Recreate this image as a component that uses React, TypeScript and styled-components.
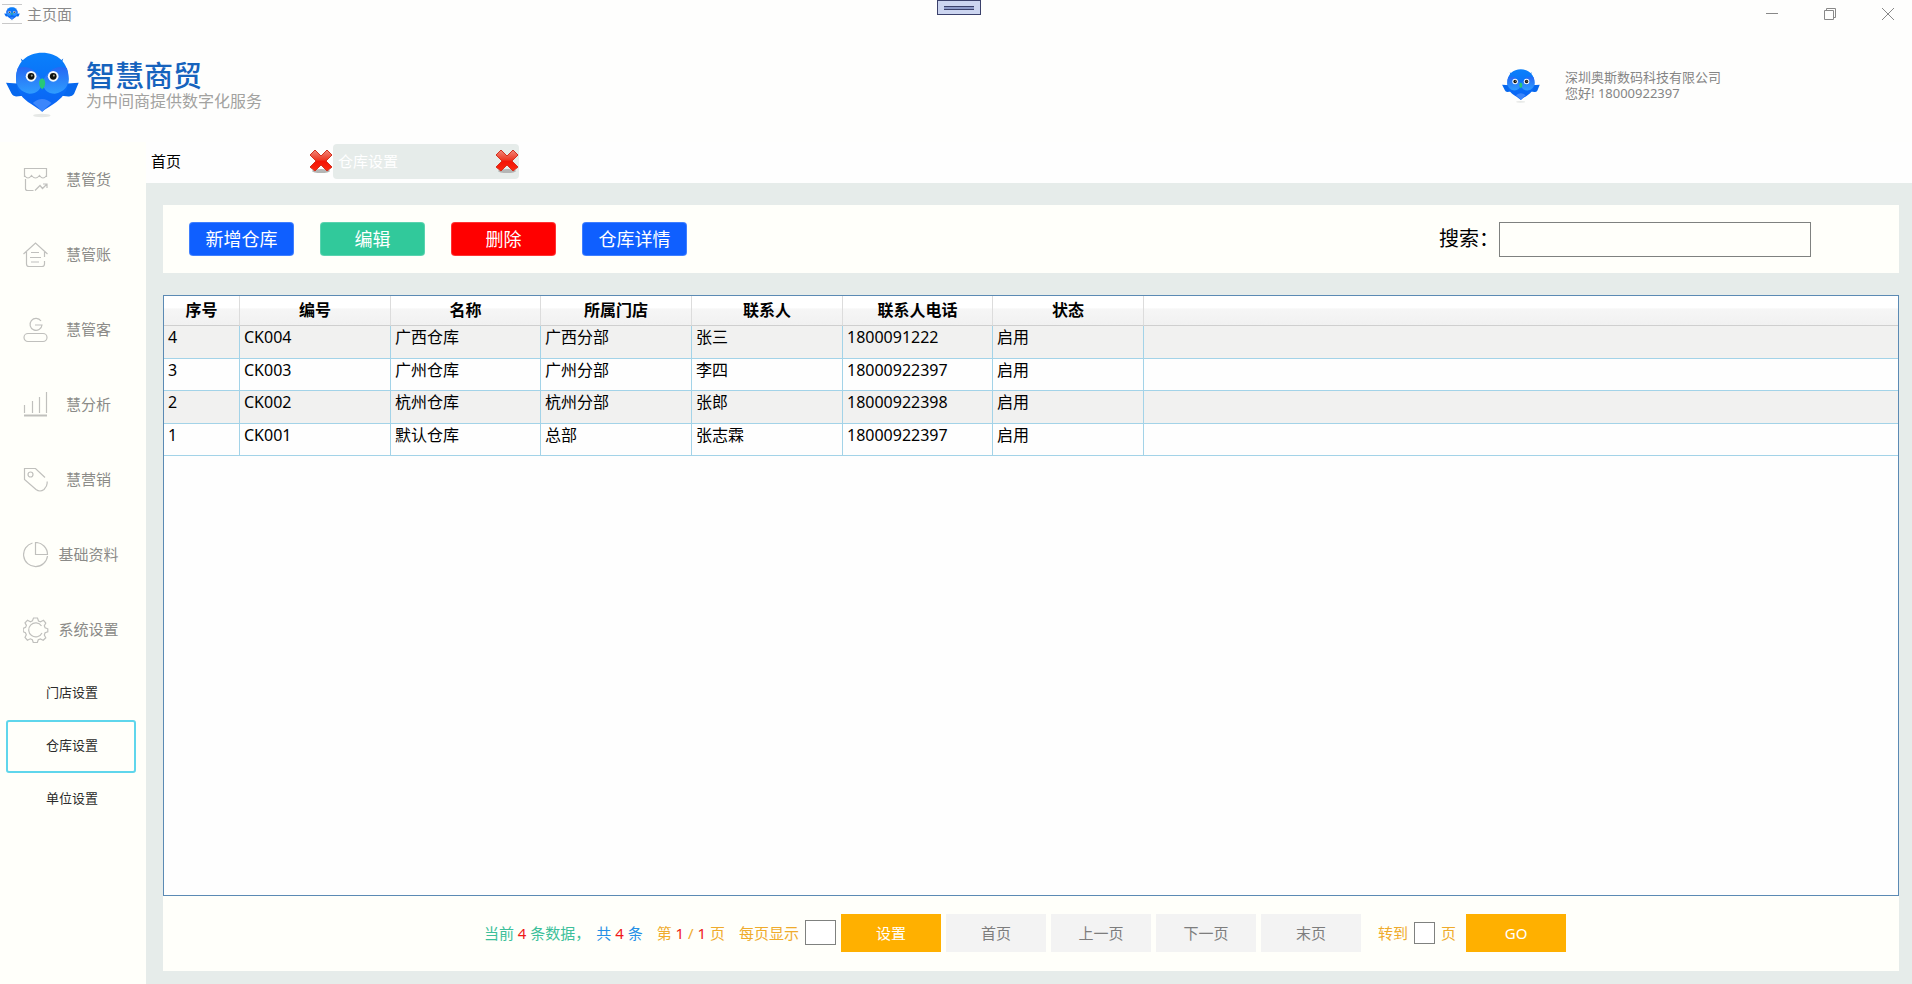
import React from "react";
import styled, { createGlobalStyle } from "styled-components";

const GlobalStyle = createGlobalStyle`
  *, *::before, *::after { box-sizing: border-box; }
  body {
    margin: 0;
    background: #fefefd;
    color: #000;
    font-family: "Noto Sans", "Noto Sans CJK SC", sans-serif;
    font-size: 15px;
    line-height: 20px;
  }
  button, input { font: inherit; margin: 0; border-radius: 0; }
  button { padding: 0; cursor: pointer; }
  a { color: inherit; text-decoration: none; }
`;

const Shell = styled.div`
  display: flex;
  flex-direction: column;
  min-height: 100vh;
`;

const TitleBar = styled.header`
  position: relative;
  display: flex;
  align-items: center;
  height: 28px;
  padding: 0 1px 0 2px;
  gap: 5px;
  color: #8a8a8a;
`;

const AppIcon = styled.span`
  display: flex;
  align-items: center;
  justify-content: center;
  width: 20px;
  height: 20px;
  border-top: 1px solid #c9c9c9;
  border-bottom: 1px solid #c9c9c9;
`;

const WindowControls = styled.div`
  display: flex;
  gap: 12px;
  margin-left: auto;
`;

const WindowButton = styled.button`
  display: flex;
  align-items: center;
  justify-content: center;
  width: 46px;
  height: 28px;
  border: 0;
  background: transparent;
  color: #888;
`;

const DragHandle = styled.div`
  position: absolute;
  top: 0;
  left: calc(50% - 19px);
  display: flex;
  justify-content: center;
  align-items: center;
  width: 44px;
  height: 15px;
  border: 1px solid #3b416b;
  background: #ccd5f0;
`;

const DragGrip = styled.span`
  width: 30px;
  height: 4px;
  border-top: 1px solid #3b416b;
  border-bottom: 1px solid #3b416b;
  background: #8e9bc9;
`;

const BrandBar = styled.div`
  display: flex;
  justify-content: space-between;
  align-items: flex-start;
  height: 114px;
  padding: 24px 191px 0 6px;
`;

const Brand = styled.div`
  display: flex;
  gap: 7px;
`;

const BrandText = styled.div`
  display: flex;
  flex-direction: column;
  padding-top: 9px;
  font-family: "Liberation Sans", "Noto Sans CJK SC", sans-serif;
`;

const BrandName = styled.h1`
  margin: 0;
  color: #1663bd;
  font-size: 29px;
  font-weight: 500;
  line-height: 32px;
`;

const BrandSlogan = styled.p`
  margin: 0;
  color: #a2a2a0;
  font-size: 16px;
  line-height: 18px;
`;

const Account = styled.div`
  display: flex;
  align-items: flex-start;
  gap: 25px;
  width: 219px;
  padding-top: 17px;
  color: #858585;
  font-size: 13px;
  line-height: 16px;
  white-space: nowrap;
`;

const OwlDrawing = styled.svg`
  flex: none;
`;

const Body = styled.div`
  display: flex;
  flex: 1;
`;

const Sidebar = styled.nav`
  flex: none;
  width: 146px;
  background: #fffffa;
`;

const MenuItem = styled.a`
  display: flex;
  align-items: center;
  height: 75px;
  padding: 0 22px 0 23px;
  gap: 4px;
  color: #8b8b88;
`;

const MenuLabel = styled.span`
  flex: 1;
  padding-bottom: 2px;
  text-align: center;
  white-space: nowrap;
`;

const SubMenu = styled.div`
  padding: 0 10px 0 6px;
`;

const SubItem = styled.a<{ $active?: boolean }>`
  display: flex;
  align-items: center;
  justify-content: center;
  height: 53px;
  padding: 0 0 4px 2px;
  border: 2px solid ${(p) => (p.$active ? "#5fd6ec" : "transparent")};
  border-radius: 3px;
  color: #2b2b2b;
  font-size: 13px;
`;

const Main = styled.main`
  display: flex;
  flex: 1;
  flex-direction: column;
  min-width: 0;
`;

const TabStrip = styled.div`
  display: flex;
  height: 41px;
  padding-top: 2px;
  background: #fefefe;
`;

const Tab = styled.div<{ $active?: boolean }>`
  display: flex;
  align-items: center;
  justify-content: space-between;
  width: ${(p) => (p.$active ? 186 : 187)}px;
  height: 35px;
  padding: 0 0 2px 5px;
  border-radius: 4px;
  background: ${(p) => (p.$active ? "#e6ecea" : "transparent")};
  color: ${(p) => (p.$active ? "#fff" : "#000")};
`;

const TabLabel = styled.button`
  border: 0;
  background: transparent;
  color: inherit;
`;

const TabClose = styled.button`
  display: flex;
  width: 24px;
  height: 24px;
  border: 0;
  background: transparent;
`;

const Workspace = styled.div`
  display: flex;
  flex: 1;
  flex-direction: column;
  padding: 22px 13px 13px 17px;
  background: #e6ecea;
`;

const Toolbar = styled.div`
  display: flex;
  align-items: center;
  height: 68px;
  margin-bottom: 22px;
  padding: 0 88px 0 26px;
  gap: 26px;
  background: #fffffa;
`;

const ActionButton = styled.button<{ $color: string }>`
  width: 105px;
  height: 34px;
  border: 1px solid rgba(255, 255, 255, 0.2);
  border-radius: 4px;
  background: ${(p) => p.$color};
  color: #fff;
  font-size: 18px;
  line-height: 24px;
`;

const SearchField = styled.label`
  display: flex;
  align-items: center;
  margin-left: auto;
  font-size: 20px;
  line-height: 24px;
`;

const SearchInput = styled.input`
  width: 312px;
  height: 35px;
  padding: 0 6px;
  border: 1px solid #7f817f;
  background: transparent;
`;

const TableFrame = styled.section`
  flex: 1;
  border: 1px solid #5b8ab4;
  background: #fefefe;
`;

const DataTable = styled.table`
  width: 100%;
  table-layout: fixed;
  border-collapse: separate;
  border-spacing: 0;
  font-size: 16px;
  line-height: 22px;
`;

const HeadCell = styled.th`
  height: 30px;
  padding: 0 0 2px;
  border-right: 1px solid #dcdcdc;
  border-bottom: 1px solid #cfcfcf;
  background: linear-gradient(#fff 0 40%, #f6f6f6 45%, #f1f1f1);
  font-weight: 600;
  &:last-child { border-right: 0; }
`;

const Row = styled.tr`
  height: 32px;
  &:nth-child(odd) {
    height: 33px;
    background: #f1f1f0;
  }
  &:nth-child(even) { background: #fefefe; }
`;

const Cell = styled.td`
  padding: 0 0 0 4px;
  border-right: 1px solid #a3d3e8;
  border-bottom: 1px solid #a3d3e8;
  vertical-align: top;
  white-space: nowrap;
  &:last-child { border-right: 0; }
`;

const Pager = styled.footer`
  display: flex;
  align-items: center;
  justify-content: center;
  height: 75px;
  padding: 0 12px 2px 0;
  gap: 5px;
  background: #fffffa;
  white-space: nowrap;
`;

const PagerGroup = styled.div<{ $gap: number }>`
  display: flex;
  align-items: center;
  gap: ${(p) => p.$gap}px;
`;

const Info = styled.span<{ $color: string }>`
  color: ${(p) => p.$color};
`;

const Num = styled.b`
  color: #f01818;
  font-weight: 400;
`;

const PagerField = styled.label`
  display: flex;
  align-items: center;
  gap: 6px;
  color: #efab2c;
`;

const PagerInput = styled.input<{ $wide?: boolean }>`
  width: ${(p) => (p.$wide ? 31 : 21)}px;
  height: ${(p) => (p.$wide ? 25 : 22)}px;
  padding: 0 2px;
  border: 1px solid #7f817f;
  background: #fff;
`;

const PagerButton = styled.button<{ $primary?: boolean }>`
  width: 100px;
  height: 38px;
  border: 0;
  background: ${(p) => (p.$primary ? "#ffb000" : "#f3f3f3")};
  color: ${(p) => (p.$primary ? "#fff" : "#7d7d7d")};
`;

const JumpGroup = styled.div`
  display: flex;
  align-items: center;
  gap: 10px;
  margin-left: 12px;
`;

function Owl({ width, id }: { width: number; id: string }) {
  return (
    <OwlDrawing width={width} height={Math.round(width * 0.9)} viewBox="20 14 218 196" aria-hidden="true">
      <defs>
        <linearGradient id={`${id}-head`} x1="0" y1="0" x2="0" y2="1">
          <stop offset="0" stopColor="#0a80fb" />
          <stop offset="1" stopColor="#0a62f4" />
        </linearGradient>
        <linearGradient id={`${id}-face`} x1="0" y1="0" x2="0" y2="1">
          <stop offset="0" stopColor="#2668f3" />
          <stop offset="1" stopColor="#2f9dff" />
        </linearGradient>
      </defs>
      <ellipse cx="127" cy="203" rx="26" ry="5" fill="#e6e8e6" />
      <path d="M64 33q6 6 14 8l-8 10zM191 33q-6 6-14 8l8 10z" fill="#1470e4" />
      <path d="M20 105l44 3h128l45-3-14 34q-5 8-17 7l-20-2H72l-22 2q-10 0-14-9z" fill="#0768ee" />
      <path d="M50 94C50 44 84 16 128 16s79 28 79 78c0 40-24 60-44 74-14 9-26 16-35 24-9-8-20-15-34-24-22-14-44-34-44-74z" fill={`url(#${id}-head)`} />
      <path d="M55 62q44-16 73 40-5 35-38 36-38-8-40-44 0-18 5-32zM202 62q-44-16-74 40 5 35 38 36 39-8 41-44 0-18-5-32z" fill={`url(#${id}-face)`} />
      <path d="M100 166q28-24 56 0-12 10-28 26-14-15-28-26z" fill="#3c86fb" />
      <circle cx="95" cy="86" r="16" fill="#f4f9fc" />
      <circle cx="161" cy="86" r="16" fill="#f4f9fc" />
      <circle cx="95" cy="86" r="10" fill="#10120f" />
      <circle cx="161" cy="86" r="10" fill="#10120f" />
      <circle cx="97" cy="84" r="3" fill="#9a9a8c" />
      <circle cx="163" cy="84" r="3" fill="#9a9a8c" />
      <path d="M128 92q10 4 9 16-1 12-9 17-8-5-9-17-1-12 9-16z" fill="#27c878" />
    </OwlDrawing>
  );
}

function CloseMark({ id }: { id: string }) {
  return (
    <svg width="24" height="24" viewBox="0 0 24 24" aria-hidden="true">
      <defs>
        <linearGradient id={id} x1="0" y1="0" x2="0" y2="1">
          <stop offset="0" stopColor="#f08a7c" />
          <stop offset="0.45" stopColor="#ee3a26" />
          <stop offset="0.55" stopColor="#f41405" />
          <stop offset="1" stopColor="#fb2a10" />
        </linearGradient>
      </defs>
      <ellipse cx="12" cy="22" rx="9" ry="2" fill="#b4b5b4" />
      <path d="M6 1l6 6 6-6 5 5-6 6 6 6-5 4-6-6-6 6-5-4 6-6-6-6z" fill={`url(#${id})`} stroke="#d3301f" strokeWidth="1" strokeLinejoin="round" />
    </svg>
  );
}

const iconPaths: Record<string, React.ReactNode> = {
  goods: (
    <path d="M1.500 10V1.500h22V10M1.500 8.500q3.500 5 7 0 4 5 8 0 3.500 5 7 0M2.500 12v9.500q0 2 2 2h6M12 23.500l5-5 2.500 3 4.500-4.500M20 17h4v4" />
  ),
  ledger: (
    <path d="M0.500 12L12.500 1l12 11M3.500 10v12q0 2.500 2.500 2.500h13q2.500 0 2.500-2.500v-3M21.500 10v5M8 10.500h8M7 15.500h11M8 20h8" />
  ),
  customer: (
    <path d="M18 4a6 6 0 1 0 1 4h-7M5 16.500h15a4 4 0 0 1 0 8H5a4 4 0 0 1 0-8z" />
  ),
  analysis: (
    <>
      <path d="M1.500 13v8M9.500 9v12M16.500 5v16M23.500 0v21" />
      <path d="M1 23.500h23" strokeWidth="2" />
    </>
  ),
  marketing: (
    <>
      <path d="M22 10.500L12.500 1.500h-11v11L13 22.500q4 3 8 0 4-4 3-8" />
      <circle cx="7.500" cy="7.500" r="2.500" />
    </>
  ),
  data: <path d="M9.500 1A12 12 0 1 0 24.500 14M12.500 0.500v12h12A12 12 0 0 0 12.500 0.500z" />,
  system: (
    <>
      <path d="M10.500 1h4l1 3 2 .8 3-1.500 2.300 2.700-1.500 2.800.8 2 2.700 1v3l-2.700 1-.8 2.200 1.500 2.800-2.600 2.500-2.900-1.400-2 .9-1 2.700h-4l-1-2.800-2-.9-2.900 1.400L2 20.500l1.300-2.700-.9-2.100-2.200-1v-3.300l2.400-1 .8-2L2 5.800 4.500 3.300l2.900 1.500 2-.9z" />
      <path d="M18.500 9a7 7 0 1 0 .5 7" />
    </>
  ),
};

function MenuIcon({ name }: { name: string }) {
  return (
    <svg width="26" height="26" viewBox="0 0 26 26" fill="none" stroke="#c0c0bd" strokeWidth="1.2" aria-hidden="true">
      {iconPaths[name]}
    </svg>
  );
}

const menu = [
  ["goods", "慧管货"],
  ["ledger", "慧管账"],
  ["customer", "慧管客"],
  ["analysis", "慧分析"],
  ["marketing", "慧营销"],
  ["data", "基础资料"],
  ["system", "系统设置"],
];

const subMenu = ["门店设置", "仓库设置", "单位设置"];

const actions = [
  ["新增仓库", "#0f5fff"],
  ["编辑", "#31c99b"],
  ["删除", "#ff0000"],
  ["仓库详情", "#0f5fff"],
];

const columns: [string, number][] = [
  ["序号", 76],
  ["编号", 151],
  ["名称", 150],
  ["所属门店", 151],
  ["联系人", 151],
  ["联系人电话", 150],
  ["状态", 151],
];

const warehouses = [
  ["4", "CK004", "广西仓库", "广西分部", "张三", "1800091222", "启用"],
  ["3", "CK003", "广州仓库", "广州分部", "李四", "18000922397", "启用"],
  ["2", "CK002", "杭州仓库", "杭州分部", "张郎", "18000922398", "启用"],
  ["1", "CK001", "默认仓库", "总部", "张志霖", "18000922397", "启用"],
];

export default function App() {
  return (
    <Shell>
      <GlobalStyle />
      <TitleBar>
        <AppIcon>
          <Owl width={16} id="owl-title" />
        </AppIcon>
        <span>主页面</span>
        <DragHandle>
          <DragGrip />
        </DragHandle>
        <WindowControls>
          <WindowButton aria-label="最小化">
            <svg width="12" height="12" stroke="currentColor"><path d="M0 5.500h12" /></svg>
          </WindowButton>
          <WindowButton aria-label="还原">
            <svg width="12" height="12" fill="none" stroke="currentColor">
              <path d="M0.500 2.500h9v9h-9zM2.500 2.500v-2h9v9h-2" />
            </svg>
          </WindowButton>
          <WindowButton aria-label="关闭">
            <svg width="12" height="12" stroke="currentColor"><path d="M0 0l12 12M12 0L0 12" /></svg>
          </WindowButton>
        </WindowControls>
      </TitleBar>

      <BrandBar>
        <Brand>
          <Owl width={73} id="owl-brand" />
          <BrandText>
            <BrandName>智慧商贸</BrandName>
            <BrandSlogan>为中间商提供数字化服务</BrandSlogan>
          </BrandText>
        </Brand>
        <Account>
          <Owl width={38} id="owl-user" />
          <div>
            <div>深圳奥斯数码科技有限公司</div>
            <div>您好! 18000922397</div>
          </div>
        </Account>
      </BrandBar>

      <Body>
        <Sidebar>
          {menu.map(([icon, label]) => (
            <MenuItem href="#" key={label}>
              <MenuIcon name={icon} />
              <MenuLabel>{label}</MenuLabel>
            </MenuItem>
          ))}
          <SubMenu>
            {subMenu.map((label) => (
              <SubItem href="#" key={label} $active={label === "仓库设置"}>
                {label}
              </SubItem>
            ))}
          </SubMenu>
        </Sidebar>

        <Main>
          <TabStrip>
            <Tab>
              <TabLabel>首页</TabLabel>
              <TabClose aria-label="关闭首页"><CloseMark id="close-home" /></TabClose>
            </Tab>
            <Tab $active>
              <TabLabel>仓库设置</TabLabel>
              <TabClose aria-label="关闭仓库设置"><CloseMark id="close-warehouse" /></TabClose>
            </Tab>
          </TabStrip>

          <Workspace>
            <Toolbar>
              {actions.map(([label, color]) => (
                <ActionButton key={label} $color={color}>{label}</ActionButton>
              ))}
              <SearchField>
                搜索：
                <SearchInput type="text" />
              </SearchField>
            </Toolbar>

            <TableFrame>
              <DataTable>
                <colgroup>
                  {columns.map(([label, width]) => (
                    <col key={label} width={width} />
                  ))}
                  <col />
                </colgroup>
                <thead>
                  <tr>
                    {columns.map(([label]) => (
                      <HeadCell key={label}>{label}</HeadCell>
                    ))}
                    <HeadCell />
                  </tr>
                </thead>
                <tbody>
                  {warehouses.map((row) => (
                    <Row key={row[0]}>
                      {row.map((value, i) => (
                        <Cell key={i}>{value}</Cell>
                      ))}
                      <Cell />
                    </Row>
                  ))}
                </tbody>
              </DataTable>
            </TableFrame>

            <Pager>
              <PagerGroup $gap={14}>
                <PagerGroup $gap={6}>
                  <Info $color="#3dbf9a">当前 <Num>4</Num> 条数据，</Info>
                  <Info $color="#2590e6">共 <Num>4</Num> 条</Info>
                </PagerGroup>
                <Info $color="#efab2c">第 <Num>1</Num> / <Num>1</Num> 页</Info>
                <PagerField>
                  每页显示
                  <PagerInput type="text" $wide />
                </PagerField>
              </PagerGroup>
              <PagerButton $primary>设置</PagerButton>
              <PagerButton>首页</PagerButton>
              <PagerButton>上一页</PagerButton>
              <PagerButton>下一页</PagerButton>
              <PagerButton>末页</PagerButton>
              <JumpGroup>
                <PagerField>
                  转到
                  <PagerInput type="text" />
                  页
                </PagerField>
                <PagerButton $primary>GO</PagerButton>
              </JumpGroup>
            </Pager>
          </Workspace>
        </Main>
      </Body>
    </Shell>
  );
}
